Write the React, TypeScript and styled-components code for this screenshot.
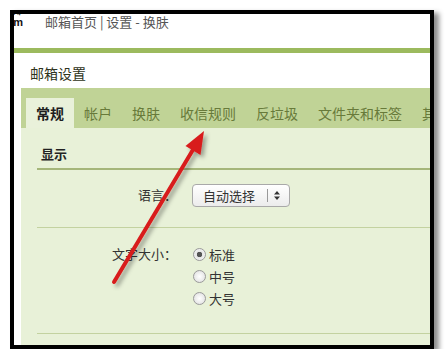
import React, { useState } from "react";
import styled, { createGlobalStyle } from "styled-components";

const GlobalStyle = createGlobalStyle`
  body {
    margin: 0;
    background: #ffffff;
    font-family: "Noto Sans CJK SC", "Liberation Sans", sans-serif;
  }
`;

// 스크린샷 테두리 (검은 프레임)
const Frame = styled.div`
  position: relative;
  box-sizing: border-box;
  width: 424px;
  height: 339px;
  margin: 10px 0 0 10px;
  border: 4px solid #000;
  overflow: hidden;
  background: #fff;
  box-shadow: 5px 3px 5px rgba(0, 0, 0, 0.45);
`;

const Header = styled.div`
  display: flex;
  align-items: flex-start;
  height: 34px;
`;

const LogoCrop = styled.div`
  display: flex;
  flex-direction: column;
  justify-content: flex-end;
  align-items: flex-end;
  gap: 3px;
  width: 9px;
  height: 13px;
  overflow: hidden;
  font-family: "Liberation Sans", sans-serif;
  font-weight: bold;
  color: #111;
`;

const LogoChar = styled.div`
  font-size: 10px;
  line-height: 10px;
  font-family: "Noto Sans CJK SC", sans-serif;
`;

const LogoText = styled.div`
  font-size: 11px;
  line-height: 9px;
`;

const Crumb = styled.div`
  margin-left: 22px;
  padding-top: 1px;
  font-size: 13px;
  line-height: 14px;
  color: #555;
  white-space: nowrap;
`;

const GreenBar = styled.div`
  height: 5px;
  background: #9cba5e;
`;

const Title = styled.div`
  height: 35px;
  box-sizing: border-box;
  padding: 10px 0 0 16px;
  font-size: 14px;
  line-height: 20px;
  color: #2e3320;
`;

const Main = styled.div`
  margin-left: 7px;
`;

const TabBar = styled.div`
  display: flex;
  align-items: flex-end;
  flex-wrap: nowrap;
  height: 40px;
  padding-left: 5px;
  background: #c0d396;
`;

const Tab = styled.div<{ $active?: boolean }>`
  flex: none;
  height: 30px;
  padding: 0 10px;
  font-size: 14px;
  line-height: 30px;
  white-space: nowrap;
  cursor: pointer;
  background: ${(p) => (p.$active ? "#e9f1da" : "transparent")};
  color: ${(p) => (p.$active ? "#1e1e1e" : "#687a3a")};
  font-weight: ${(p) => (p.$active ? "bold" : "normal")};
`;

const Content = styled.div`
  height: 217px;
  padding-left: 16px;
  background: #e8f1d8;
`;

const SectionHead = styled.div`
  padding: 16px 0 4px 4px;
  font-size: 13px;
  line-height: 20px;
  font-weight: bold;
  color: #222;
  border-bottom: 2px solid #a5b67a;
`;

const Row = styled.div<{ $pad: string }>`
  display: flex;
  align-items: flex-start;
  padding: ${(p) => p.$pad};
  border-bottom: 1px solid #c3d2a0;
`;

const Label = styled.div`
  width: 140px;
  margin-right: 15px;
  text-align: right;
  font-size: 13px;
  line-height: 22px;
  color: #333;
`;

const SelectBox = styled.div`
  display: flex;
  align-items: center;
  box-sizing: border-box;
  width: 98px;
  height: 23px;
  padding-left: 10px;
  border: 1px solid #a9a9a9;
  border-radius: 4px;
  background: linear-gradient(#ffffff, #ececec);
  font-size: 13px;
  color: #333;
`;

const SelectText = styled.span`
  width: 64px;
`;

const SelectSep = styled.span`
  width: 1px;
  height: 13px;
  background: #999;
  margin-right: 6px;
`;

const RadioList = styled.div`
  display: flex;
  flex-direction: column;
`;

const RadioItem = styled.label`
  display: flex;
  align-items: center;
  height: 22px;
  font-size: 13px;
  color: #333;
  cursor: pointer;

  input {
    appearance: none;
    box-sizing: border-box;
    width: 13px;
    height: 13px;
    margin: 0 3px 0 1px;
    border: 1px solid #9a9a9a;
    border-radius: 50%;
    background: radial-gradient(#ffffff, #dcdcdc);
  }

  input:checked {
    background: radial-gradient(circle, #555 0 2.5px, #e6e6e6 3px, #fafafa 100%);
  }
`;

const ArrowLayer = styled.svg`
  position: absolute;
  left: -14px;
  top: -14px;
  width: 445px;
  height: 350px;
  pointer-events: none;
`;

const tabs = ["常规", "帐户", "换肤", "收信规则", "反垃圾", "文件夹和标签", "其他"];
const sizes = ["标准", "中号", "大号"];

export default function App() {
  const [size, setSize] = useState("标准");

  return (
    <>
      <GlobalStyle />
      <Frame>
        <Header>
          <LogoCrop>
            <LogoChar>邮</LogoChar>
            <LogoText>com</LogoText>
          </LogoCrop>
          <Crumb>邮箱首页 | 设置 - 换肤</Crumb>
        </Header>
        <GreenBar />
        <Title>邮箱设置</Title>
        <Main>
          <TabBar>
            {tabs.map((t, i) => (
              <Tab key={t} $active={i === 0}>
                {t}
              </Tab>
            ))}
          </TabBar>
          <Content>
            <SectionHead>显示</SectionHead>
            <Row $pad="14px 0 20px">
              <Label>语言：</Label>
              <SelectBox>
                <SelectText>自动选择</SelectText>
                <SelectSep />
                <svg width="6" height="9" viewBox="0 0 6 9">
                  <path d="M3 0 L6 3.5 H0 Z M3 9 L0 5.5 H6 Z" fill="#333" />
                </svg>
              </SelectBox>
            </Row>
            <Row $pad="15px 0 24px">
              <Label>文字大小：</Label>
              <RadioList>
                {sizes.map((s) => (
                  <RadioItem key={s}>
                    <input
                      type="radio"
                      name="fontsize"
                      checked={size === s}
                      onChange={() => setSize(s)}
                    />
                    {s}
                  </RadioItem>
                ))}
              </RadioList>
            </Row>
          </Content>
        </Main>
        {/* 빨간 화살표 */}
        <ArrowLayer viewBox="0 0 445 350">
          <defs>
            <filter id="shadow" x="-50%" y="-50%" width="200%" height="200%">
              <feDropShadow dx="3" dy="3" stdDeviation="2" floodColor="#000" floodOpacity="0.35" />
            </filter>
          </defs>
          <g filter="url(#shadow)">
            <line
              x1="114"
              y1="282"
              x2="194"
              y2="148"
              stroke="#d81c1c"
              strokeWidth="4"
              strokeLinecap="round"
            />
            <polygon points="204,131 200.5,155 185.5,146" fill="#d81c1c" />
          </g>
        </ArrowLayer>
      </Frame>
    </>
  );
}
